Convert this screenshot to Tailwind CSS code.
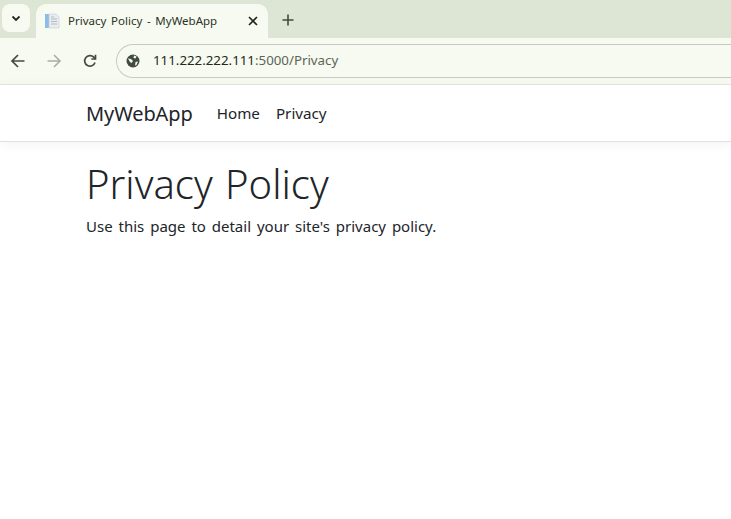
<!DOCTYPE html>
<html lang="en">
  <head>
    <meta charset="UTF-8" />
    <title>Privacy Policy - MyWebApp</title>
    <script src="https://cdn.jsdelivr.net/npm/@tailwindcss/browser@4"></script>
  </head>
  <body class="w-[731px] h-[519px] overflow-hidden bg-white font-['Noto_Sans',sans-serif]">
    <!-- tab strip -->
    <div class="h-[38px] bg-[#dde6d5] flex items-start pt-1 pl-0.5">
      <div class="w-7 h-7 rounded-lg bg-[#f7faf0] flex items-center justify-center">
        <svg width="12" height="12" viewBox="0 0 12 12" fill="none" stroke="#1f2a1c" stroke-width="1.8"><path d="M2.5 4.5 6 8l3.5-3.5" /></svg>
      </div>
      <div class="w-[232px] h-[34px] ml-1.5 rounded-t-[10px] bg-[#f7faf0] flex items-center pl-2 pr-2.5">
        <svg width="16" height="16" viewBox="0 0 16 16" class="shrink-0">
          <path d="M1 1h4v14H1z" fill="#8dbce6" />
          <path d="M5 1h7l3 3v11H5z" fill="#e8ecef" stroke="#c5ccd2" stroke-width="0.6" />
          <path d="M7 4h3M7 6h6M7 8.5h6M7 11h6" stroke="#b4bcc4" stroke-width="1" />
        </svg>
        <span class="ml-2 text-[11.5px] [word-spacing:1.7px] text-[#2b3328] whitespace-nowrap">Privacy Policy - MyWebApp</span>
        <svg width="10" height="10" viewBox="0 0 10 10" class="ml-auto" stroke="#1f2a1c" stroke-width="1.7"><path d="M1 1l8 8M9 1l-8 8" /></svg>
      </div>
      <svg width="12" height="12" viewBox="0 0 12 12" class="ml-3.5 mt-2.5" stroke="#414c3e" stroke-width="1.6"><path d="M6 .5v11M.5 6h11" /></svg>
    </div>
    <!-- toolbar -->
    <div class="h-[47px] bg-[#f7faf0] border-b border-[#e3e8da] flex items-start pt-1.5">
      <svg width="16" height="16" viewBox="0 0 16 16" fill="none" stroke="#414c3e" stroke-width="1.7" class="ml-2.5 mt-[9px]"><path d="M14.5 8H2M8 2 2 8l6 6" /></svg>
      <svg width="16" height="16" viewBox="0 0 16 16" fill="none" stroke="#a9afa4" stroke-width="1.6" class="ml-5 mt-[9px]"><path d="M1.5 8H14M8 2l6 6-6 6" /></svg>
      <svg width="16" height="16" viewBox="0 0 16 16" fill="none" stroke="#414c3e" stroke-width="1.7" class="ml-5 mt-[9px]"><path d="M13 9.5A5.3 5.3 0 1 1 11.8 4.2L13.5 6" /><path d="M13.5 1.8V6H9.3" /></svg>
      <div class="ml-[18px] h-[34px] flex-1 rounded-l-full border border-r-0 border-[#c6cbbf] flex items-center pl-[9px]">
        <svg width="14" height="14" viewBox="0 0 14 14" class="shrink-0">
          <circle cx="7" cy="7" r="6.5" fill="#414c3e" />
          <path d="M2 4.5l3 .5 2 2-1.5 2L4 8zM8 1.5l2.5 1-1 2-2-.5zM9.5 8l2.5-.5-1.5 3.5-1.5.5z" fill="#f7faf0" />
        </svg>
        <span class="ml-[13px] text-[13.3px] whitespace-nowrap text-[#1f2a1c]">111.222.222.111<span class="text-[#5b6558]">:5000/Privacy</span></span>
      </div>
    </div>
    <!-- navbar -->
    <nav class="h-[57px] border-b border-[#dee2e6] shadow-[0_2px_12px_rgba(0,0,0,0.05)] flex items-center pl-[86px]">
      <a class="text-[20px] mt-0.5 text-[#212529] tracking-[-0.1px]">MyWebApp</a>
      <div class="flex ml-6 gap-4 text-[15.2px] text-[#212529]">
        <a>Home</a>
        <a>Privacy</a>
      </div>
    </nav>
    <main class="pl-[86px] text-[#212529]">
      <h1 class="text-[40px] font-light [word-spacing:2px] leading-[48px] mt-[18px]">Privacy Policy</h1>
      <p class="text-[15px] [word-spacing:2px] leading-6 mt-1.5">Use this page to detail your site's privacy policy.</p>
    </main>
  </body>
</html>
